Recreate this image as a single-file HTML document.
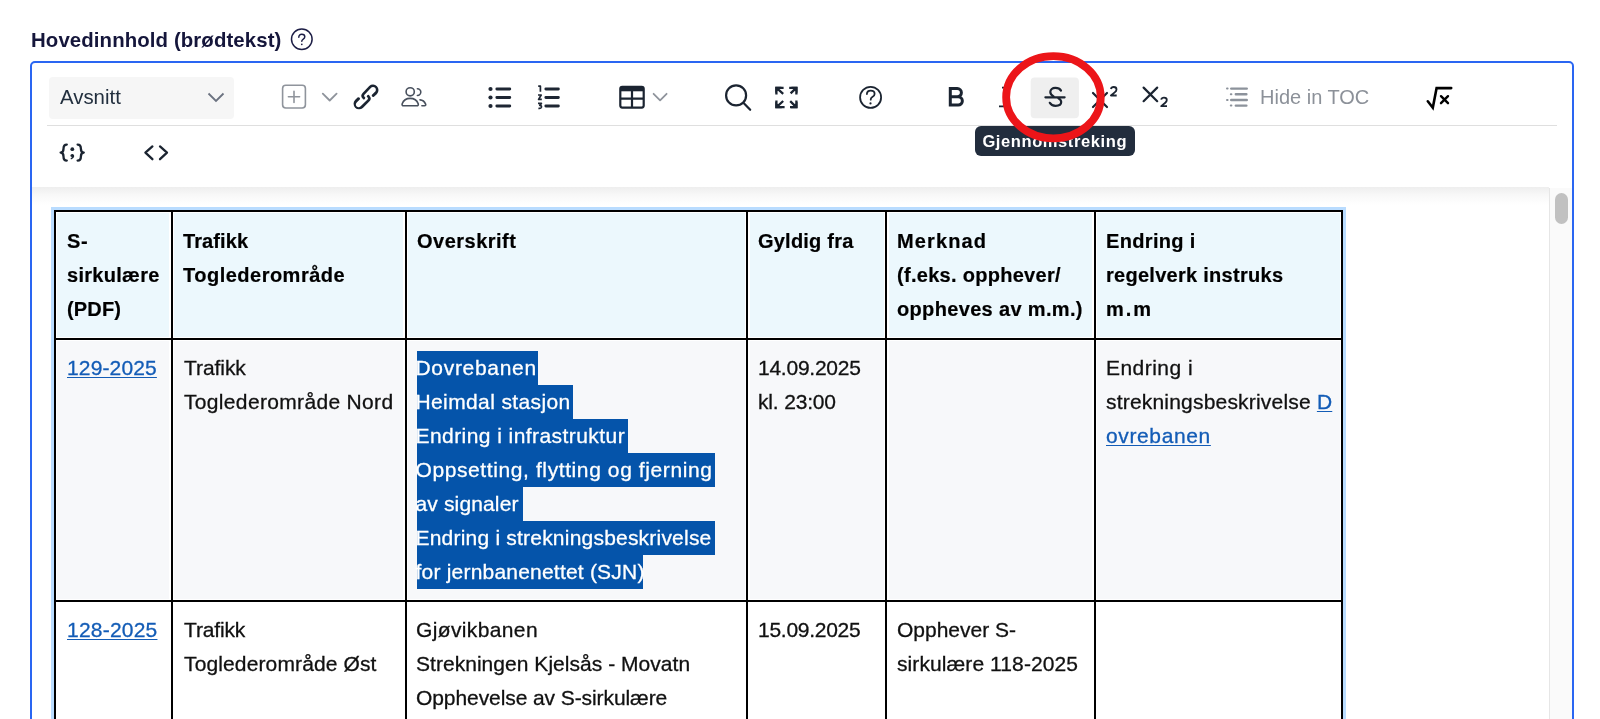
<!DOCTYPE html>
<html><head><meta charset="utf-8">
<style>
*{box-sizing:border-box;margin:0;padding:0}
html,body{width:1600px;height:719px;overflow:hidden;background:#fff;font-family:"Liberation Sans",sans-serif}
.abs{position:absolute}
body{-webkit-font-smoothing:antialiased}
#label,.tx,#sel span,#tip,#hide{will-change:transform}
#label{left:31px;top:27.3px;letter-spacing:0.1px;font-size:20.4px;font-weight:bold;color:#15163b;line-height:26px;white-space:nowrap}
#editor{left:30px;top:61px;width:1543.8px;height:700px;border:2px solid #2a66f2;border-radius:5px;background:#fff}
.sep{left:47px;top:124.8px;width:1510px;height:1.4px;background:#dfdfdf}
#sel{left:49px;top:77.2px;width:184.5px;height:41.4px;background:#f6f6f6;border-radius:4px}
#sel span{position:absolute;left:11px;top:7px;font-size:20.4px;color:#222f3e;line-height:26px}
.ic{position:absolute;overflow:visible}
#shadow{left:32px;top:187px;width:1517px;height:18px;background:linear-gradient(#eeeeee,#f8f8f8 45%,#fff)}
#track{left:1549px;top:188px;width:23px;height:531px;background:#fafafa;border-left:1px solid #e6e6e6}
#thumb{left:1555px;top:193px;width:12.5px;height:31px;background:#c1c1c1;border-radius:7px}
#tip{left:975px;top:126px;width:159.5px;height:29.8px;background:#222d3d;border-radius:6px;color:#fff;font-size:16.5px;font-weight:bold;line-height:31.4px;text-align:center;letter-spacing:0.6px}
.ln{background:#000}
.tx{font-size:21px;line-height:34px;color:#111;-webkit-text-stroke:0.3px currentColor;white-space:nowrap}
.tx.b{font-size:20px;font-weight:bold;color:#000;-webkit-text-stroke:0.2px #000}
.tx a{color:#135cb6;text-decoration:underline;text-underline-offset:2px;text-decoration-thickness:1.4px}
.hl{display:inline-block;background:#0554aa;color:#fff;height:34px}
#hide{left:1260px;top:84px;font-size:20px;color:#8c9199;line-height:26px;white-space:nowrap}
</style></head><body>
<div id="label" class="abs">Hovedinnhold (brødtekst)</div>
<svg class="ic" style="left:289px;top:28px" width="26" height="24" viewBox="0 0 26 24"><circle cx="12.8" cy="11.2" r="10.3" fill="none" stroke="#1c1d45" stroke-width="1.5"/><path d="M9.8 9.2c0-1.9 1.3-3 3-3s3 1.1 3 2.6c0 1.3-.8 1.9-1.8 2.5-.8.5-1.2 1-1.2 2" fill="none" stroke="#1c1d45" stroke-width="1.5" stroke-linecap="round"/><circle cx="12.8" cy="16.3" r="0.85" fill="#1c1d45"/></svg>

<div id="editor" class="abs"></div>
<div id="sel" class="abs"><span>Avsnitt</span>
<svg class="ic" style="left:158px;top:15px" width="18" height="12" viewBox="0 0 18 12"><path d="M1.5 1.5l7.5 7.5 7.5-7.5" fill="none" stroke="#6b7280" stroke-width="1.8"/></svg>
</div>
<div class="sep abs"></div>
<div id="shadow" class="abs"></div>
<div id="track" class="abs"></div>
<div id="thumb" class="abs"></div>

<div class="abs" style="left:50.6px;top:206.8px;width:1295.8000000000002px;height:600px;background:#b9dcff"></div>
<div class="abs" style="left:53.6px;top:209.8px;width:1289.8000000000002px;height:130.2px;background:#fff"></div>
<div class="abs" style="left:57.0px;top:213.20000000000002px;width:112.2px;height:123.39999999999999px;background:#ecf8fd"></div>
<div class="abs" style="left:174.0px;top:213.20000000000002px;width:229.1px;height:123.39999999999999px;background:#ecf8fd"></div>
<div class="abs" style="left:407.9px;top:213.20000000000002px;width:336.8px;height:123.39999999999999px;background:#ecf8fd"></div>
<div class="abs" style="left:749.5px;top:213.20000000000002px;width:134.2px;height:123.39999999999999px;background:#ecf8fd"></div>
<div class="abs" style="left:888.5px;top:213.20000000000002px;width:203.69999999999987px;height:123.39999999999999px;background:#ecf8fd"></div>
<div class="abs" style="left:1097.0px;top:213.20000000000002px;width:243.00000000000017px;height:123.39999999999999px;background:#ecf8fd"></div>
<div class="abs" style="left:53.6px;top:338.0px;width:1289.8000000000002px;height:264.29999999999995px;background:#fff"></div>
<div class="abs" style="left:57.0px;top:341.4px;width:112.2px;height:257.49999999999994px;background:#f7f8fa"></div>
<div class="abs" style="left:174.0px;top:341.4px;width:229.1px;height:257.49999999999994px;background:#f7f8fa"></div>
<div class="abs" style="left:407.9px;top:341.4px;width:336.8px;height:257.49999999999994px;background:#f7f8fa"></div>
<div class="abs" style="left:749.5px;top:341.4px;width:134.2px;height:257.49999999999994px;background:#f7f8fa"></div>
<div class="abs" style="left:888.5px;top:341.4px;width:203.69999999999987px;height:257.49999999999994px;background:#f7f8fa"></div>
<div class="abs" style="left:1097.0px;top:341.4px;width:243.00000000000017px;height:257.49999999999994px;background:#f7f8fa"></div>
<div class="abs" style="left:53.6px;top:600.3px;width:1289.8000000000002px;height:263.70000000000005px;background:#fff"></div>
<div class="abs" style="left:57.0px;top:603.6999999999999px;width:112.2px;height:256.90000000000003px;background:#ffffff"></div>
<div class="abs" style="left:174.0px;top:603.6999999999999px;width:229.1px;height:256.90000000000003px;background:#ffffff"></div>
<div class="abs" style="left:407.9px;top:603.6999999999999px;width:336.8px;height:256.90000000000003px;background:#ffffff"></div>
<div class="abs" style="left:749.5px;top:603.6999999999999px;width:134.2px;height:256.90000000000003px;background:#ffffff"></div>
<div class="abs" style="left:888.5px;top:603.6999999999999px;width:203.69999999999987px;height:256.90000000000003px;background:#ffffff"></div>
<div class="abs" style="left:1097.0px;top:603.6999999999999px;width:243.00000000000017px;height:256.90000000000003px;background:#ffffff"></div>
<div class="abs ln" style="left:53.6px;top:209.8px;width:2.0px;height:652.2px"></div>
<div class="abs ln" style="left:170.6px;top:209.8px;width:2.0px;height:652.2px"></div>
<div class="abs ln" style="left:404.5px;top:209.8px;width:2.0px;height:652.2px"></div>
<div class="abs ln" style="left:746.1px;top:209.8px;width:2.0px;height:652.2px"></div>
<div class="abs ln" style="left:885.1px;top:209.8px;width:2.0px;height:652.2px"></div>
<div class="abs ln" style="left:1093.6px;top:209.8px;width:2.0px;height:652.2px"></div>
<div class="abs ln" style="left:1341.4px;top:209.8px;width:2.0px;height:652.2px"></div>
<div class="abs ln" style="left:53.6px;top:209.8px;width:1289.8000000000002px;height:2.0px"></div>
<div class="abs ln" style="left:53.6px;top:338.0px;width:1289.8000000000002px;height:2.0px"></div>
<div class="abs ln" style="left:53.6px;top:600.3px;width:1289.8000000000002px;height:2.0px"></div>
<div class="abs tx b" style="left:67.0px;top:223.5px"><div id="h0_0"><span style="letter-spacing:0.600px">S-</span></div><div id="h0_1"><span style="letter-spacing:0.287px">sirkulære</span></div><div id="h0_2"><span style="letter-spacing:0.150px">(PDF)</span></div></div>
<div class="abs tx b" style="left:183.4px;top:223.5px"><div id="h1_0"><span style="letter-spacing:0.100px">Trafikk</span></div><div id="h1_1"><span style="letter-spacing:0.492px">Toglederområde</span></div></div>
<div class="abs tx b" style="left:416.5px;top:223.5px"><div id="h2_0"><span style="letter-spacing:0.489px">Overskrift</span></div></div>
<div class="abs tx b" style="left:758.1px;top:223.5px"><div id="h3_0"><span style="letter-spacing:0.222px">Gyldig fra</span></div></div>
<div class="abs tx b" style="left:897.1px;top:223.5px"><div id="h4_0"><span style="letter-spacing:1.117px">Merknad</span></div><div id="h4_1"><span style="letter-spacing:0.288px">(f.eks. opphever/</span></div><div id="h4_2"><span style="letter-spacing:0.338px">oppheves av m.m.)</span></div></div>
<div class="abs tx b" style="left:1105.6px;top:223.5px"><div id="h5_0"><span style="letter-spacing:0.337px">Endring i</span></div><div id="h5_1"><span style="letter-spacing:0.276px">regelverk instruks</span></div><div id="h5_2"><span style="letter-spacing:2.000px">m.m</span></div></div>
<div class="abs tx" style="left:67.2px;top:350.8px"><div id="a0_0"><span style="letter-spacing:0.143px"><a>129-2025</a></span></div></div>
<div class="abs tx" style="left:183.5px;top:350.8px"><div id="a1_0"><span style="letter-spacing:-0.067px">Trafikk</span></div><div id="a1_1"><span style="letter-spacing:0.333px">Toglederområde Nord</span></div></div>
<div class="abs tx" style="left:417.1px;top:350.8px"><div id="a2_0"><span class="hl" style="width:121.3px"><span style="margin-left:-1.5px;letter-spacing:0.689px">Dovrebanen</span></span></div><div id="a2_1"><span class="hl" style="width:155.6px"><span style="margin-left:-1.5px;letter-spacing:0.379px">Heimdal stasjon</span></span></div><div id="a2_2"><span class="hl" style="width:211.3px"><span style="margin-left:-1.5px;letter-spacing:0.436px">Endring i infrastruktur</span></span></div><div id="a2_3"><span class="hl" style="width:298.4px"><span style="margin-left:-1.5px;letter-spacing:0.600px">Oppsetting, flytting og fjerning</span></span></div><div id="a2_4"><span class="hl" style="width:105.8px"><span style="margin-left:-1.5px;letter-spacing:0.140px">av signaler</span></span></div><div id="a2_5"><span class="hl" style="width:298.4px"><span style="margin-left:-1.5px;letter-spacing:0.210px">Endring i strekningsbeskrivelse</span></span></div><div id="a2_6"><span class="hl" style="width:225.8px"><span style="margin-left:-1.5px;letter-spacing:0.209px">for jernbanenettet (SJN)</span></span></div></div>
<div class="abs tx" style="left:758.1px;top:350.8px"><div id="a3_0"><span style="letter-spacing:-0.244px">14.09.2025</span></div><div id="a3_1"><span style="letter-spacing:-0.175px">kl. 23:00</span></div></div>
<div class="abs tx" style="left:1105.6px;top:350.8px"><div id="a5_0"><span style="letter-spacing:0.462px">Endring i</span></div><div id="a5_1"><span style="letter-spacing:0.195px">strekningsbeskrivelse <a>D</a></span></div><div id="a5_2"><span style="letter-spacing:0.625px"><a>ovrebanen</a></span></div></div>
<div class="abs tx" style="left:66.7px;top:613.0px"><div id="b0_0"><span style="letter-spacing:0.214px"><a>128-2025</a></span></div></div>
<div class="abs tx" style="left:183.6px;top:613.0px"><div id="b1_0"><span style="letter-spacing:-0.150px">Trafikk</span></div><div id="b1_1"><span style="letter-spacing:0.129px">Toglederområde Øst</span></div></div>
<div class="abs tx" style="left:415.7px;top:613.0px"><div id="b2_0"><span style="letter-spacing:0.370px">Gjøvikbanen</span></div><div id="b2_1"><span style="letter-spacing:0.037px">Strekningen Kjelsås - Movatn</span></div><div id="b2_2"><span style="letter-spacing:-0.083px">Opphevelse av S-sirkulære</span></div></div>
<div class="abs tx" style="left:758.1px;top:613.0px"><div id="b3_0"><span style="letter-spacing:-0.267px">15.09.2025</span></div></div>
<div class="abs tx" style="left:897.1px;top:613.0px"><div id="b4_0"><span>Opphever S-</span></div><div id="b4_1"><span style="letter-spacing:0.094px">sirkulære 118-2025</span></div></div>
<svg class="abs" style="left:0;top:0" width="1600" height="200" viewBox="0 0 1600 200">
<g fill="none" stroke-linecap="round" stroke-linejoin="round">
<!-- plus box -->
<rect x="282.6" y="85.2" width="22.8" height="22.8" rx="3.2" stroke="#8f949c" stroke-width="1.6"/>
<path d="M294 91.2v11.2M288.4 96.8h11.2" stroke="#8f949c" stroke-width="1.6"/>
<!-- chevron -->
<path d="M322.8 93.6l6.9 6.9 6.9-6.9" stroke="#8f949c" stroke-width="1.8"/>
<!-- link -->
<path transform="translate(349.2 80.4) scale(1.39)" fill="#1b2431" stroke="none" d="M6.2 12.3a1 1 0 0 1 1.4 1.4l-2 2a2 2 0 1 0 2.8 2.8l4.8-4.8a1 1 0 0 0 0-1.4 1 1 0 1 1 1.4-1.3 2.9 2.9 0 0 1 0 4L9.8 19.8a4 4 0 0 1-5.6-5.7l2-1.9Zm11.6-.6a1 1 0 0 1-1.4-1.4l2-2a2 2 0 1 0-2.8-2.8L11 10.3a1 1 0 0 0 0 1.4A1 1 0 1 1 9.6 13a2.9 2.9 0 0 1 0-4L14.4 4a4 4 0 0 1 5.6 5.7l-2 1.9Z"/>
<!-- people -->
<g stroke="#48505d" stroke-width="1.6">
<circle cx="410.2" cy="91.8" r="4.1"/>
<path d="M403.6 105.8h13.2c1.2 0 1.8-.8 1.4-2-1.2-3.4-4.4-5.4-8-5.4s-6.8 2-8 5.4c-.4 1.2.2 2 1.4 2z"/>
<path d="M417.4 88.7a3.4 3.4 0 1 1 0 6.8"/>
<path d="M420 99.9c2.6.2 4.6 1.8 5.6 4.2.4 1-.1 1.7-1.1 1.7h-2.6"/>
</g>
<!-- lists -->
<g stroke="#1e2633" stroke-width="2.8">
<path d="M496.8 89h13M496.8 97.5h13M496.8 106h13"/>
<path d="M545.8 89h12.6M545.8 97.5h12.6M545.8 106h12.6"/>
</g>
<g fill="#1e2633"><circle cx="490.5" cy="89" r="2.1"/><circle cx="490.5" cy="97.5" r="2.1"/><circle cx="490.5" cy="106" r="2.1"/></g>
<g stroke="#1e2633" stroke-width="1.7" stroke-linecap="butt">
<path d="M538.2 86.2h2.2v5.6"/>
<path d="M538 95h3.2l-2.6 4.4h3.2"/>
<path d="M538 103.4h3.4l-1.6 2c1.6 0 1.8 1 1.6 1.8-.3.9-1.4 1.4-3 1.1"/>
</g>
<!-- table -->
<rect x="620.3" y="86.8" width="23.4" height="20.8" rx="2" stroke="#1b2431" stroke-width="2.2"/>
<path d="M620.3 89.5h23.4" stroke="#1b2431" stroke-width="3.6" stroke-linecap="butt"/>
<path d="M632 91v16M621 98.6h22" stroke="#1b2431" stroke-width="2.2" stroke-linecap="butt"/>
<path d="M653.6 93.8l6.5 6.5 6.5-6.5" stroke="#8f949c" stroke-width="1.8"/>
<!-- search -->
<circle cx="736.1" cy="95.4" r="10" stroke="#1b2431" stroke-width="2.2"/>
<path d="M743.6 102.9l6.6 6.9" stroke="#1b2431" stroke-width="2.2"/>
<!-- fullscreen -->
<g stroke="#1b2431" stroke-width="2.3" stroke-linecap="butt" stroke-linejoin="miter">
<path d="M783.6 87.8h-7.2v6.6M776.8 88.2l6.4 5.6"/>
<path d="M789.2 87.8h7.2v6.6M796 88.2l-5.4 5.2"/>
<path d="M784.6 107.2h-8.2v-6.6M776.8 106.8l6.4-5.8"/>
<path d="M790 107.2h6.4v-6.8M796 106.8l-5.8-5.6"/>
</g>
<g fill="#1b2431"><path d="M775.3 86.7h6.2l-6.2 6.2z"/><path d="M797.5 86.7h-6.2l6.2 6.2z"/><path d="M775.3 108.3h6.6l-6.6-6.6z"/><path d="M797.5 108.3h-6.6l6.6-6.6z"/></g>
<!-- help -->
<circle cx="870.6" cy="97.4" r="10.5" stroke="#1b2431" stroke-width="1.8"/>
<path d="M866.9 94.1c0-2.2 1.7-3.4 3.8-3.4 2.2 0 3.9 1.3 3.9 3.2 0 1.6-1 2.4-2.3 3.2-1.1.7-1.6 1.3-1.6 2.6" stroke="#1b2431" stroke-width="1.8"/>
<circle cx="870.5" cy="103.4" r="1.1" fill="#1b2431"/>
<!-- B -->
<path d="M950.3 88.6h7a4.1 4.1 0 0 1 0 8.2h-7zM950.3 96.8h7.9a4.15 4.15 0 0 1 0 8.3h-7.9z" stroke="#1b2431" stroke-width="3" stroke-linejoin="miter"/>
<!-- italic I -->
<path d="M1002 87.6h9M999 106.4h8M1008.6 87.6l-5 18.8" stroke="#1b2431" stroke-width="1.9" stroke-linecap="butt"/>
<!-- strikethrough button -->
<rect x="1030.7" y="77.5" width="48.2" height="40.7" rx="4" fill="#efefef" stroke="none"/>
<path d="M1061 90.6C1060 88.9 1058 87.9 1055.4 87.9 1052.4 87.9 1050.3 89.6 1050.3 92.1 1050.3 94.1 1051.5 95.4 1053.6 96.4M1058.4 98.2C1060.2 99.2 1061.2 100.5 1061.2 102.1 1061.2 104.5 1058.8 105.9 1055.6 105.9 1052.8 105.9 1050.8 104.8 1049.8 102.8" stroke="#1b2431" stroke-width="2.2"/>
<path d="M1045.4 97.3h19.2" stroke="#1b2431" stroke-width="2.2"/>
<!-- X2 super -->
<path d="M1093 93l14 14M1107 93l-14 14" stroke="#1b2431" stroke-width="2.2"/>
<path d="M1110.9 89c.3-1.3 1.4-2 2.8-2 1.6 0 2.8 1 2.8 2.4 0 1.2-.6 2-1.8 3l-3.8 3.1h5.8" stroke="#1b2431" stroke-width="1.8" stroke-linecap="butt"/>
<!-- X2 sub -->
<path d="M1143.6 87.6l13.6 13.6M1157.2 87.6l-13.6 13.6" stroke="#1b2431" stroke-width="2.2"/>
<path d="M1161.2 99.6c.3-1.3 1.4-2 2.8-2 1.6 0 2.8 1 2.8 2.4 0 1.2-.6 2-1.8 3l-3.8 3.1h5.8" stroke="#1b2431" stroke-width="1.8" stroke-linecap="butt"/>
<!-- TOC -->
<g stroke="#8c929b" stroke-width="2.4">
<path d="M1231.2 88.6h15.6M1231.2 100h15.6M1235.8 94.3h10.6M1235.8 105.6h10.6"/>
<path d="M1227 88.6h.6M1227 100h.6M1230.8 94.3h.6M1230.8 105.6h.6" stroke-width="2"/>
</g>
<!-- sqrt x -->
<path d="M1427.8 101.3l5 6.4 3.8-19.6h14.6" stroke="#000" stroke-width="2.6" stroke-linecap="round" stroke-linejoin="miter"/>
<path d="M1441 96.2l7 7M1448 96.2l-7 7" stroke="#000" stroke-width="2.4"/>
<!-- row 2 -->
<g stroke="#1b2431" stroke-width="2.3">
<path d="M66.8 144.6c-2.8 0-3.3 1.8-3.3 4.2 0 2.4-.6 3.8-2.9 3.8 2.3 0 2.9 1.4 2.9 3.8 0 2.4.5 4.2 3.3 4.2"/>
<path d="M77.6 144.6c2.8 0 3.3 1.8 3.3 4.2 0 2.4.6 3.8 2.9 3.8-2.3 0-2.9 1.4-2.9 3.8 0 2.4-.5 4.2-3.3 4.2"/>
<path d="M152.4 146.4l-7 6.2 7 6.6M160 146.4l7 6.2-7 6.6" stroke-width="2.3"/>
</g>
<g fill="#1b2431"><circle cx="72.3" cy="149.2" r="1.9"/><path d="M70.4 155.6a1.9 1.9 0 0 1 3.8.4c0 1.5-1.3 2.9-3.2 3.4l-.5-.8c.9-.5 1.3-1 1.4-1.5-1-.1-1.6-.7-1.5-1.5z"/></g>
</g>
</svg>

<div id="tip" class="abs">Gjennomstreking</div>
<div id="hide" class="abs">Hide in TOC</div>
<svg class="abs" style="left:0;top:0" width="1600" height="200" viewBox="0 0 1600 200">
<!-- red ellipse -->
<ellipse cx="1053.45" cy="97.2" rx="47.3" ry="41.1" fill="none" stroke="#ec1519" stroke-width="7.8"/>
</svg>
</body></html>
